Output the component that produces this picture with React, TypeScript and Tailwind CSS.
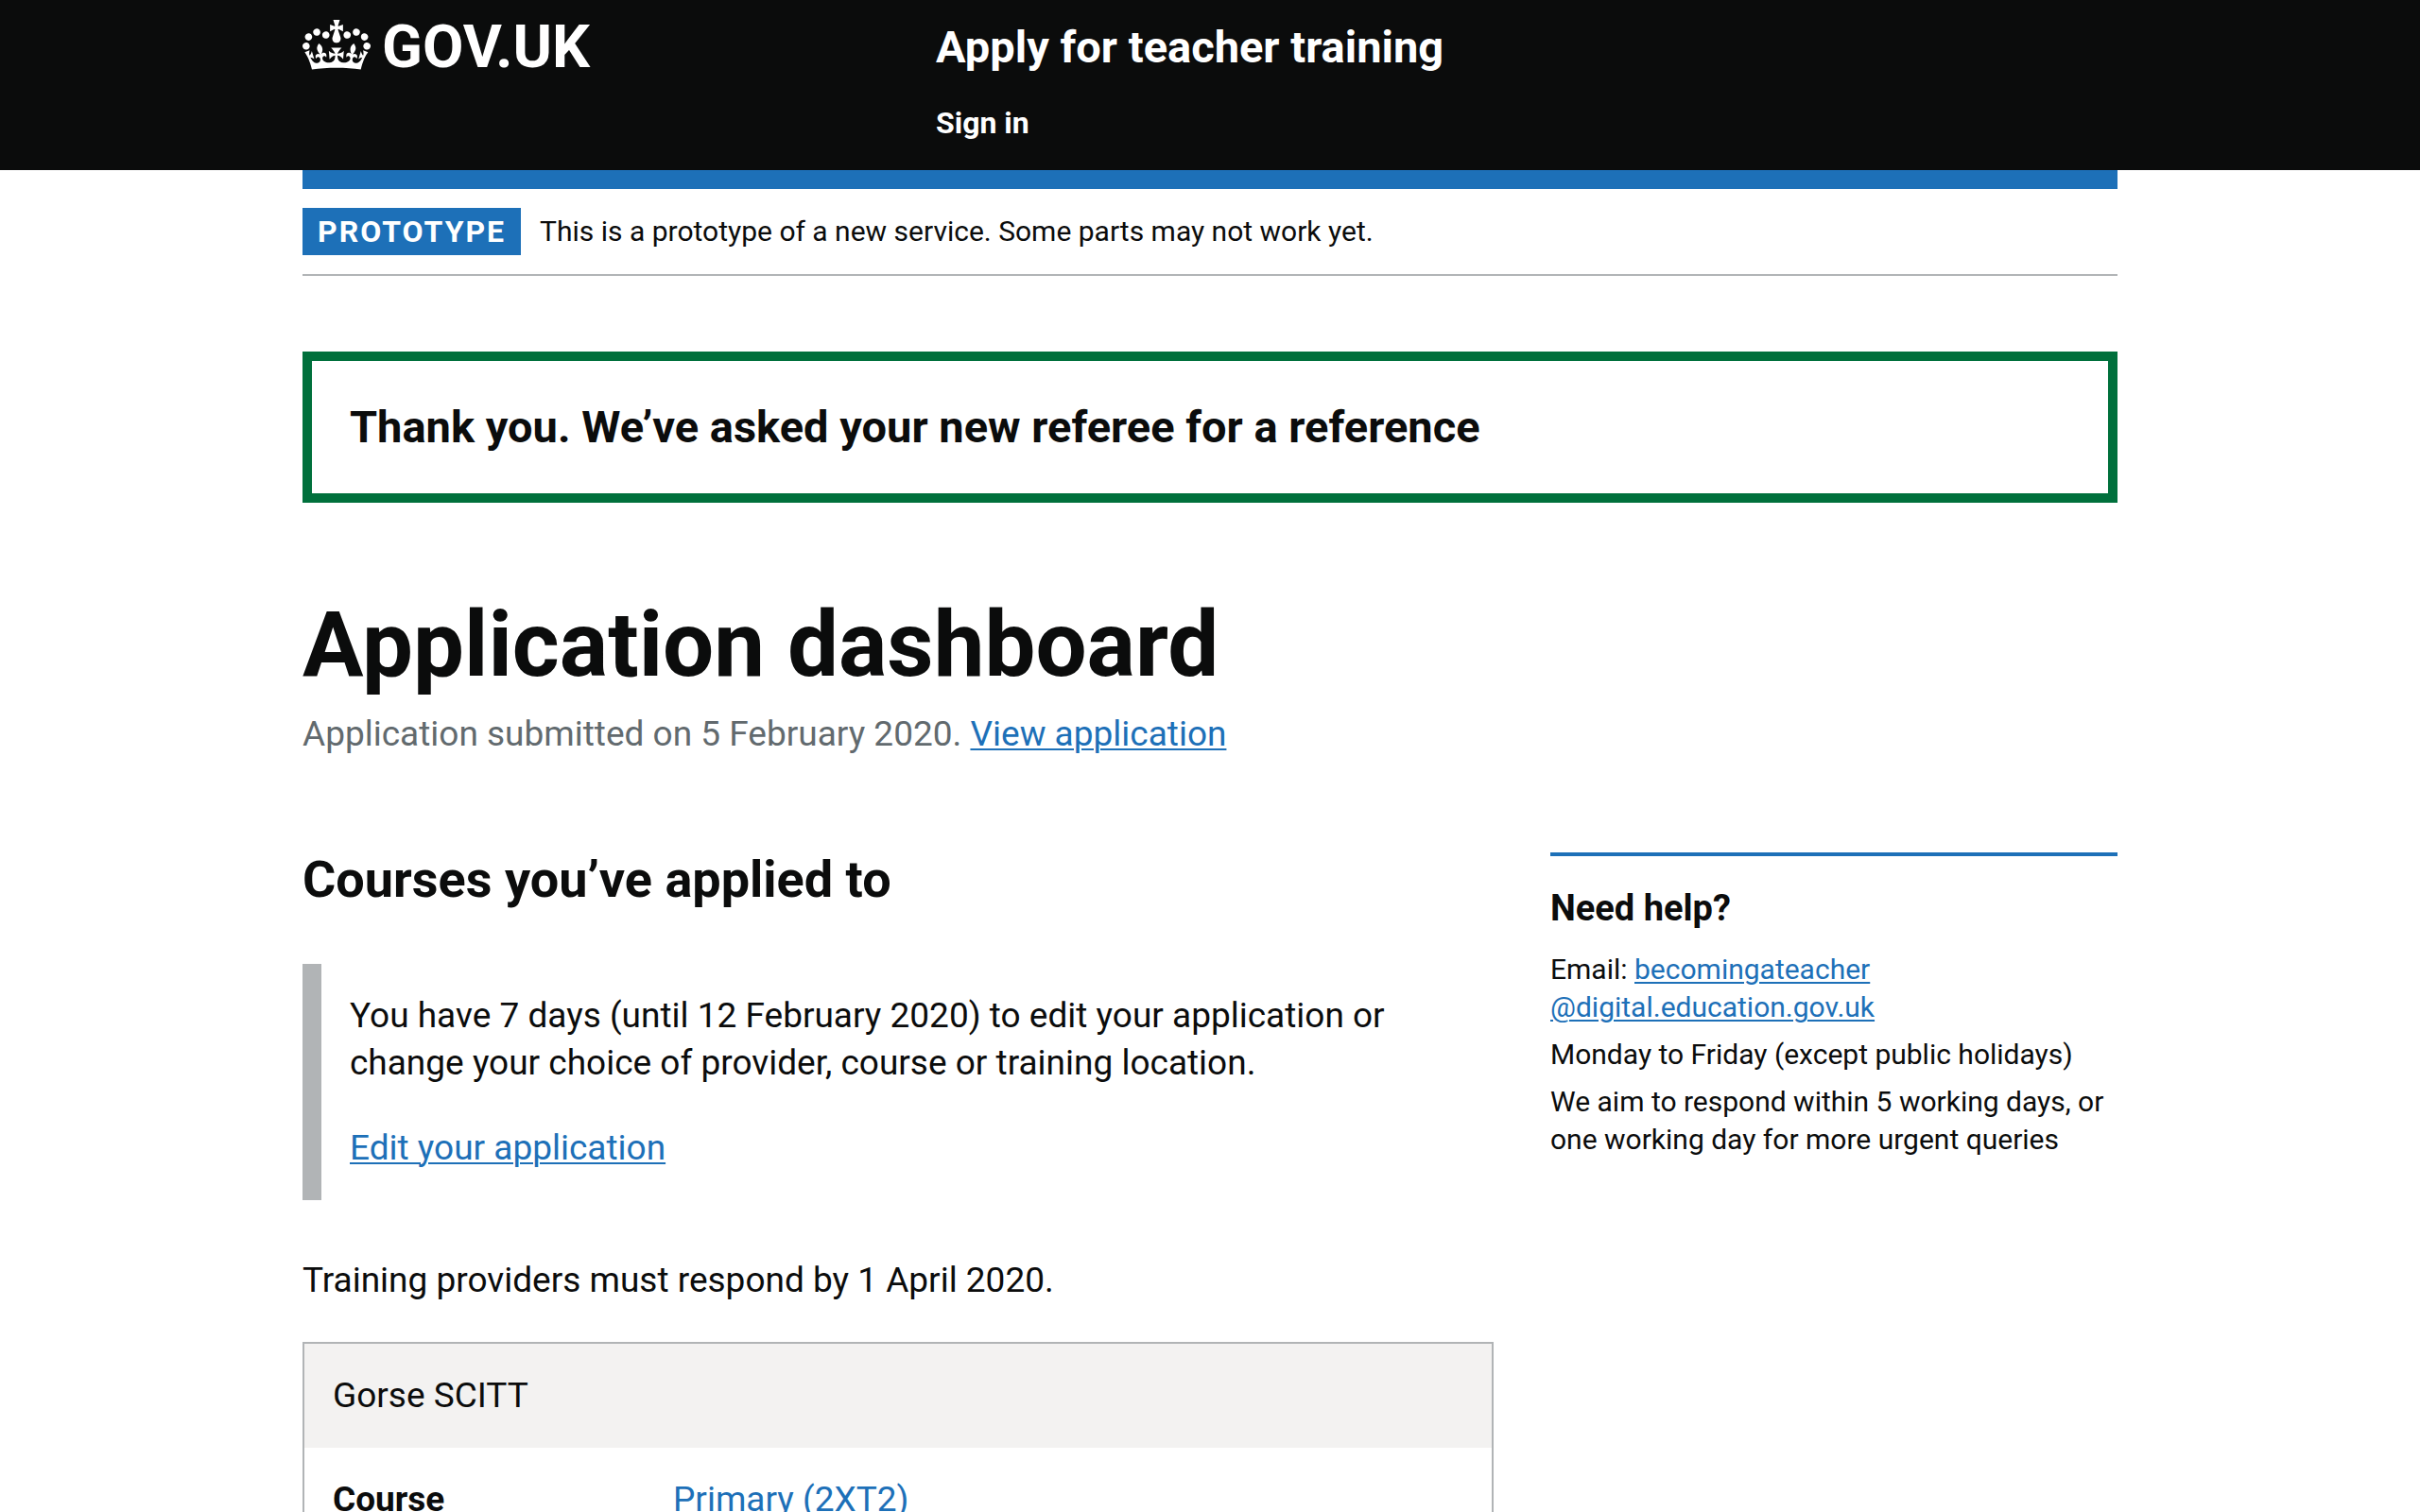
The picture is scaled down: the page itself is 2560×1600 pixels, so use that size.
import type { ReactNode } from "react";

const CROWN =
  "M25 30.2c3.5 1.5 7.7-.2 9.1-3.7 1.5-3.6-.2-7.8-3.9-9.2-3.6-1.4-7.6.3-9.1 3.9-1.4 3.5.3 7.5 3.9 9zM9 39.5c3.6 1.5 7.8-.2 9.2-3.7 1.5-3.6-.2-7.8-3.9-9.1-3.6-1.5-7.6.2-9.1 3.8-1.4 3.5.3 7.5 3.8 9zM4.4 57.2c3.5 1.5 7.7-.2 9.1-3.8 1.5-3.6-.2-7.7-3.9-9.1-3.5-1.5-7.6.3-9.1 3.8-1.4 3.5.3 7.6 3.9 9.1zm38.3-21.4c3.5 1.5 7.7-.2 9.1-3.8 1.5-3.6-.2-7.7-3.9-9.1-3.6-1.5-7.6.3-9.1 3.8-1.3 3.6.4 7.7 3.9 9.1zm64.4-5.6c-3.6 1.5-7.8-.2-9.1-3.7-1.5-3.6.2-7.8 3.8-9.2 3.6-1.4 7.7.3 9.2 3.9 1.3 3.5-.4 7.5-3.9 9zm15.9 9.3c-3.6 1.5-7.7-.2-9.1-3.7-1.5-3.6.2-7.8 3.7-9.1 3.6-1.5 7.7.2 9.2 3.8 1.5 3.5-.3 7.5-3.8 9zm4.7 17.7c-3.6 1.5-7.8-.2-9.2-3.8-1.5-3.6.2-7.7 3.9-9.1 3.6-1.5 7.7.3 9.2 3.8 1.3 3.5-.4 7.6-3.9 9.1zM89.3 35.8c-3.6 1.5-7.8-.2-9.2-3.8-1.4-3.6.2-7.7 3.9-9.1 3.6-1.5 7.7.3 9.2 3.8 1.4 3.6-.3 7.7-3.9 9.1zM69.7 17.7l8.9 4.7V9.3l-8.9 2.8c-.2-.3-.5-.6-.9-.9L72.4 0H59.6l3.5 11.2c-.3.3-.6.5-.9.9l-8.8-2.8v13.1l8.8-4.7c.3.3.6.7.9.9l-5 15.4v.1c-.2.8-.4 1.6-.4 2.4 0 4.1 3.1 7.5 7 8.1h.2c.3 0 .7.1 1 .1.4 0 .7 0 1-.1h.2c4-.6 7.1-4.1 7.1-8.1 0-.8-.1-1.7-.4-2.4V34l-5.1-15.4c.4-.2.7-.6 1-.9zM66 92.8c16.9 0 32.8 1.1 47.1 3.2 4-16.9 8.9-26.7 14-33.5l-9.6-3.4c1 4.9 1.1 7.2 0 10.2-1.5-1.4-3-4.3-4.2-8.7L108.6 76c2.8-2 5-3.2 7.5-3.3-4.4 9.4-10 11.9-13.6 11.2-4.3-.8-6.3-4.6-5.6-7.9 1-4.7 5.7-5.9 8-.5 4.3-8.7-3-11.4-7.6-8.8 7.1-7.2 7.9-13.5 2.1-21.1-8 6.1-8.1 12.3-4.5 20.8-4.7-5.4-12.1-2.5-9.5 6.2 3.4-5.2 7.9-2 7.2 3.1-.6 4.3-6.4 7.8-13.5 7.2-10.3-.9-10.9-8-11.2-13.8 2.5-.5 7.1 1.8 11 7.3L80.2 60c-4.1 4.4-8 5.3-12.3 5.4 1.4-4.4 8-11.6 8-11.6H55.5s6.4 7.2 7.9 11.6c-4.2-.1-8-1-12.3-5.4l1.4 16.4c3.9-5.5 8.5-7.7 10.9-7.3-.3 5.8-.9 12.8-11.1 13.8-7.2.6-12.9-2.9-13.5-7.2-.7-5 3.8-8.3 7.1-3.1 2.7-8.7-4.6-11.6-9.4-6.2 3.7-8.5 3.6-14.7-4.6-20.8-5.8 7.6-5 13.9 2.2 21.1-4.7-2.6-11.9.1-7.7 8.8 2.3-5.5 7.1-4.2 8.1.5.7 3.3-1.3 7.1-5.7 7.9-3.5.7-9-1.8-13.5-11.2 2.5.1 4.7 1.3 7.5 3.3l-4.7-15.4c-1.2 4.4-2.7 7.2-4.3 8.7-1.1-3-.9-5.3 0-10.2l-9.5 3.4c5 6.9 9.9 16.7 14 33.5 14.8-2.1 30.8-3.2 47.7-3.2z";

function Container({ children }: { children: ReactNode }) {
  return <div className="mx-auto w-full max-w-[1920px]">{children}</div>;
}

function Link({ children }: { children: ReactNode }) {
  return (
    <a href="#" className="text-[#1d70b8] underline decoration-2 underline-offset-3">
      {children}
    </a>
  );
}

function Header() {
  return (
    <header className="bg-[#0b0c0c] text-white">
      <Container>
        <div className="grid grid-cols-3 gap-[60px] pt-5 pb-[30px]">
          <a href="#" className="flex items-start gap-3 text-[63px] leading-[60px] font-bold">
            <svg viewBox="0 0 132 97" className="h-[55px] w-[72px] shrink-0" aria-hidden="true">
              <path fill="currentColor" fillRule="evenodd" d={CROWN} />
            </svg>
            GOV.UK
          </a>
          <div className="col-span-2 flex flex-col items-start gap-[30px] pl-2.5 font-bold">
            <a href="#" className="text-[47px] leading-[60px]">
              Apply for teacher training
            </a>
            <nav>
              <a href="#" className="block text-[32px] leading-10">
                Sign in
              </a>
            </nav>
          </div>
        </div>
      </Container>
    </header>
  );
}

function PhaseBanner() {
  return (
    <div className="flex items-center gap-5 border-t-20 border-b-2 border-t-[#1d70b8] border-b-[#b1b4b6] py-5 leading-[50px]">
      <strong className="bg-[#1d70b8] px-4 text-[32px] font-bold tracking-[2px] text-white uppercase">
        Prototype
      </strong>
      <span className="text-[30px]">
        This is a prototype of a new service. Some parts may not work yet.
      </span>
    </div>
  );
}

function Help() {
  return (
    <aside className="self-start border-t-4 border-[#1d70b8] pt-[30px]">
      <h2 className="text-[38px] leading-[50px] font-bold">Need help?</h2>
      <div className="mt-5 flex flex-col gap-2.5 text-[30px] leading-10">
        <p>
          Email:{" "}
          <Link>
            becomingateacher
            <wbr />
            @digital.education.gov.uk
          </Link>
        </p>
        <p>Monday to Friday (except public holidays)</p>
        <p>We aim to respond within 5 working days, or one working day for more urgent queries</p>
      </div>
    </aside>
  );
}

function Courses() {
  return (
    <section className="col-span-2">
      <h2 className="text-[54px] leading-[58px] font-bold">Courses you’ve applied to</h2>
      <div className="mt-15 flex flex-col gap-10 border-l-20 border-[#b1b4b6] p-[30px]">
        <p>
          You have 7 days (until 12 February 2020) to edit your application or change your choice of
          provider, course or training location.
        </p>
        <p>
          <Link>Edit your application</Link>
        </p>
      </div>
      <p className="mt-15">Training providers must respond by 1 April 2020.</p>
      <article className="mt-10 border-2 border-[#b1b4b6]">
        <h3 className="bg-[#f3f2f1] p-[30px]">Gorse SCITT</h3>
        <dl className="flex p-[30px]">
          <dt className="w-[360px] font-bold">Course</dt>
          <dd>
            <Link>Primary (2XT2)</Link>
          </dd>
        </dl>
      </article>
    </section>
  );
}

export default function App() {
  return (
    <div className="h-screen overflow-hidden bg-white font-['Roboto',sans-serif] text-[37px] leading-[50px] text-[#0b0c0c]">
      <Header />
      <Container>
        <PhaseBanner />
        <main>
          <div role="status" className="mt-20 border-10 border-[#00703c] p-10">
            <h2 className="text-[47px] leading-[60px] font-bold">
              Thank you. We’ve asked your new referee for a reference
            </h2>
          </div>
          <h1 className="mt-25 text-[96px] leading-[100px] font-bold">Application dashboard</h1>
          <p className="mt-5 text-[#626a6e]">
            Application submitted on 5 February 2020. <Link>View application</Link>
          </p>
          <div className="mt-25 grid grid-cols-3 gap-[60px]">
            <Courses />
            <Help />
          </div>
        </main>
      </Container>
    </div>
  );
}
